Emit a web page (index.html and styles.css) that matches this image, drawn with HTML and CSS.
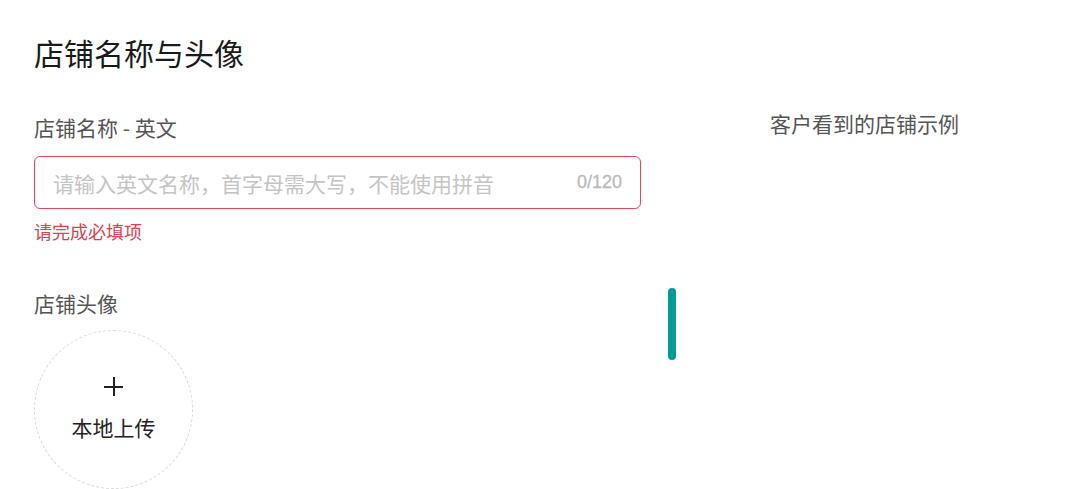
FILE: index.html
```html
<!DOCTYPE html>
<html lang="zh-CN">
<head>
<meta charset="utf-8">
<title>店铺名称与头像</title>
<link rel="stylesheet" href="styles.css">
</head>
<body>
<div class="page">
  <h1 class="title">店铺名称与头像</h1>
  <div class="body">
    <div class="form">
      <div class="field-label">店铺名称 - 英文</div>
      <div class="input-box">
        <span class="placeholder">请输入英文名称，首字母需大写，不能使用拼音</span>
        <span class="counter">0/120</span>
      </div>
      <div class="error">请完成必填项</div>
      <div class="field-label avatar-label">店铺头像</div>
      <div class="upload">
        <span class="plus"></span>
        <span class="upload-text">本地上传</span>
      </div>
    </div>
    <div class="divider"><span class="handle"></span></div>
    <div class="preview">
      <div class="preview-label">客户看到的店铺示例</div>
    </div>
  </div>
</div>
</body>
</html>
```

FILE: styles.css
```css
html, body {
  margin: 0;
  padding: 0;
  background: #fff;
}
body {
  font-family: "Noto Sans CJK SC", "Liberation Sans", sans-serif;
  color: #222;
}
.page {
  padding: 32px 0 0 34px;
}
.title {
  margin: 0;
  font-size: 30px;
  line-height: 40px;
  font-weight: 400;
  color: #1a1a1a;
}
.body {
  display: flex;
  align-items: flex-start;
}
.form {
  width: 607px;
  display: flex;
  flex-direction: column;
  padding-top: 41px;
}
.field-label {
  font-size: 21px;
  line-height: 28px;
  color: #555;
}
.input-box {
  margin-top: 15px;
  height: 53px;
  box-sizing: border-box;
  border: 1px solid #e24a57;
  border-radius: 6px;
  display: flex;
  align-items: center;
  justify-content: space-between;
  padding: 0 18px 0 18px;
}
.placeholder {
  font-size: 21px;
  color: #c4c4c4;
}
.counter {
  font-family: "Liberation Sans", sans-serif;
  font-size: 18px;
  color: #bababa;
  -webkit-text-stroke: 0.3px #bababa;
}
.error {
  margin-top: 9px;
  font-size: 18px;
  line-height: 26px;
  color: #e0414f;
}
.avatar-label {
  margin-top: 45px;
}
.upload {
  margin-top: 13px;
  width: 159px;
  height: 159px;
  box-sizing: border-box;
  border: 1px dashed #d9d9d9;
  border-radius: 50%;
  display: flex;
  flex-direction: column;
  align-items: center;
  padding-top: 46px;
}
.plus {
  position: relative;
  width: 19px;
  height: 19px;
}
.plus::before,
.plus::after {
  content: "";
  position: absolute;
  background: #222;
}
.plus::before {
  left: 0;
  top: 9px;
  width: 19px;
  height: 2px;
}
.plus::after {
  left: 9px;
  top: 0;
  width: 2px;
  height: 19px;
}
.upload-text {
  margin-top: 17px;
  font-size: 21px;
  line-height: 28px;
  color: #222;
}
.divider {
  width: 129px;
  padding-top: 216px;
}
.handle {
  display: block;
  margin-left: 27px;
  width: 8px;
  height: 72px;
  border-radius: 4px;
  background: #039c94;
}
.preview {
  padding-top: 37px;
}
.preview-label {
  font-size: 21px;
  line-height: 28px;
  color: #555;
}
```
